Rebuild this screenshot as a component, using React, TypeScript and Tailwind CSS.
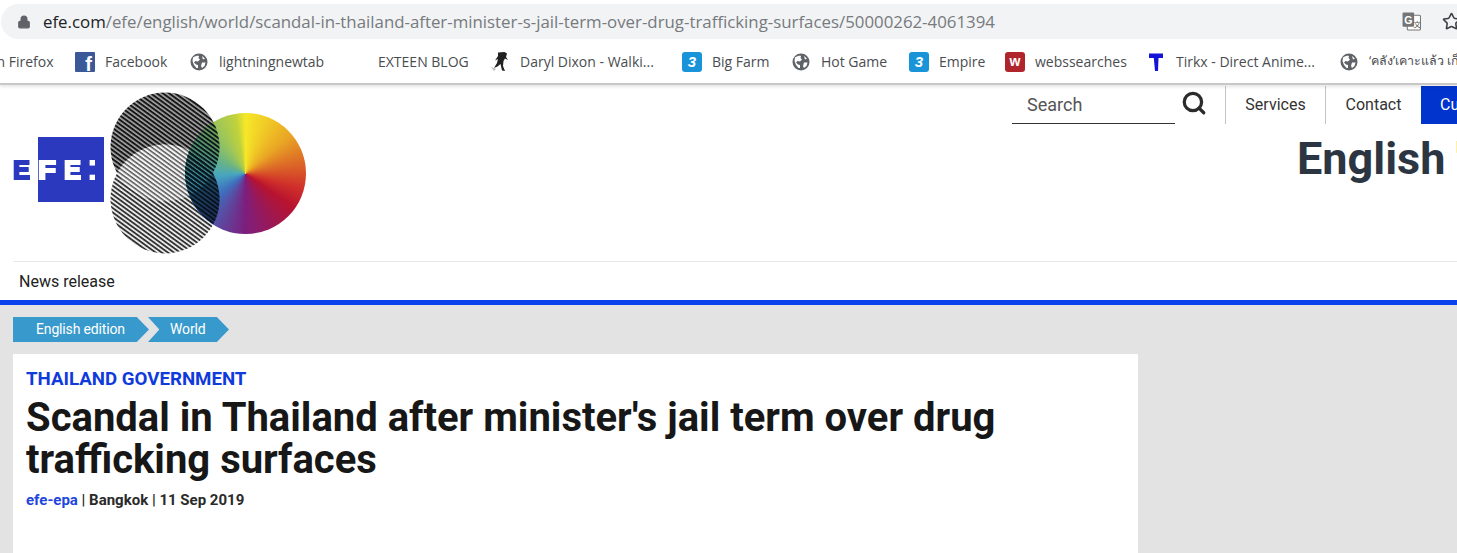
import React from 'react';
import { Lock, Search, Star } from 'lucide-react';

const Globe = () => (
  <svg viewBox="0 0 18 18" className="w-[18px] h-[18px] mr-px shrink-0">
    <circle cx="9" cy="9" r="8.5" fill="#5f6368" />
    <path d="M3 4.5 C5 3 8 2.5 9 3 L8.5 5 L10 6.5 L8 8.5 L5.5 8 L4 9.5 L6 11.5 L8 12 L8 15 L6.5 15 L4 12 L2.5 8 Z" fill="#fff" />
    <path d="M12 9.5 L15.5 9.5 L14.5 13 L12 15 L11 13 Z" fill="#fff" />
    <path d="M12 3 L15 5.5 L13 6.5 Z" fill="#fff" />
  </svg>
);

const Cube = () => (
  <span className="w-5 h-5 rounded-[3px] bg-[#1a94d9] text-white text-[15px] leading-5 font-bold italic text-center shrink-0 font-['Liberation_Sans',sans-serif]">3</span>
);

const bookmarkClass = "flex items-center gap-[10px] shrink-0 text-[14px] text-[#4a4d50] font-['Open_Sans','Noto_Sans',sans-serif]";
const logoFont = 'Liberation Sans, sans-serif';
const topCircle = 'M110.5 62 a54.5 54.5 0 1 0 109 0 a54.5 54.5 0 1 0 -109 0 Z';

const Logo = () => (
  <svg viewBox="0 0 320 175" className="w-[320px] h-[175px] shrink-0 blur-[0.5px]">
    <defs>
      <pattern id="dark" width="3.6" height="3.6" patternUnits="userSpaceOnUse" patternTransform="rotate(36)">
        <rect width="3.6" height="3.6" fill="#a8a8a8" />
        <rect width="3.6" height="2" fill="#161616" />
      </pattern>
      <pattern id="mid" width="3.6" height="3.6" patternUnits="userSpaceOnUse" patternTransform="rotate(36)">
        <rect width="3.6" height="3.6" fill="#e8e8e8" />
        <rect width="3.6" height="1.7" fill="#2a2a2a" />
      </pattern>
      <pattern id="light" width="3.6" height="3.6" patternUnits="userSpaceOnUse" patternTransform="rotate(36)">
        <rect width="3.6" height="3.6" fill="#f4f4f4" />
        <rect width="3.6" height="1.5" fill="#555" />
      </pattern>
      <pattern id="over" width="3.6" height="3.6" patternUnits="userSpaceOnUse" patternTransform="rotate(36)">
        <rect width="3.6" height="2" fill="#08161c" />
      </pattern>
      <clipPath id="wheel"><circle cx="245.5" cy="88" r="60.5" /></clipPath>
      <clipPath id="top"><circle cx="165" cy="62" r="54.5" /></clipPath>
      <clipPath id="bottom"><circle cx="165" cy="114" r="54.5" /></clipPath>
    </defs>
    <rect x="38" y="52" width="66" height="65" fill="#2a39bd" />
    <text x="13" y="94" fontSize="26" fontWeight="900" fontFamily={logoFont} fill="#2a39bd" stroke="#2a39bd" strokeWidth="2" textLength="17" lengthAdjust="spacingAndGlyphs">E</text>
    <text x="38" y="94" fontSize="26" fontWeight="900" fontFamily={logoFont} fill="#fff" stroke="#fff" strokeWidth="2" textLength="18" lengthAdjust="spacingAndGlyphs">F</text>
    <text x="64" y="94" fontSize="26" fontWeight="900" fontFamily={logoFont} fill="#fff" stroke="#fff" strokeWidth="2" textLength="17" lengthAdjust="spacingAndGlyphs">E</text>
    <text x="86" y="95" fontSize="38" fontWeight="900" fontFamily={logoFont} fill="#fff">:</text>
    <circle cx="165" cy="62" r="54.5" fill="url(#dark)" />
    <circle cx="165" cy="114" r="54.5" fill="url(#mid)" />
    <g clipPath="url(#top)"><circle cx="165" cy="114" r="54.5" fill="url(#light)" /></g>
    <foreignObject x="185" y="27.5" width="121" height="121">
      <div className="w-[121px] h-[121px] rounded-full bg-[conic-gradient(#f6e828_0deg,#e9a524_50deg,#d0302a_105deg,#b8132f_125deg,#7d1e7d_180deg,#3f6ebd_230deg,#46a5c0_265deg,#6cb482_300deg,#c0d23c_350deg,#f6e828_360deg)]" />
    </foreignObject>
    <g clipPath="url(#wheel)">
      <circle cx="165" cy="62" r="54.5" fill="#0a3030" opacity="0.18" />
      <circle cx="165" cy="62" r="54.5" fill="url(#over)" />
      <circle cx="165" cy="114" r="54.5" fill="url(#over)" />
      <g clipPath="url(#bottom)">
        <path d={`M170 0 H320 V175 H170 Z ${topCircle}`} fillRule="evenodd" fill="#04101c" opacity="0.55" />
      </g>
    </g>
  </svg>
);

export default function App() {
  return (
    <div className="w-[1457px] h-[553px] overflow-hidden bg-[#e3e3e3] flex flex-col">
      {/* browser chrome */}
      <div className="bg-white h-[40px] pt-1 pl-px shrink-0">
        <div className="h-[35px] w-[1500px] rounded-l-full bg-[#f1f3f4] flex items-center">
          <Lock className="w-[14px] h-[14px] ml-[16px] text-[#5f6368]" fill="#5f6368" />
          <span className="ml-[12px] text-[16.83px] text-[#777a7e] whitespace-nowrap font-['Open_Sans',sans-serif]"><span className="text-[#202124]">efe.com</span>/efe/english/world/scandal-in-thailand-after-minister-s-jail-term-over-drug-trafficking-surfaces/50000262-4061394</span>
          <svg viewBox="0 0 18 18" className="ml-[407px] w-[19px] h-[19px] shrink-0">
            <rect x="5" y="3" width="12.5" height="14" rx="1" fill="#fff" stroke="#777" strokeWidth="1" />
            <rect x="0.5" y="0.5" width="11" height="13.5" rx="1" fill="#757575" />
            <text x="2.2" y="11" fontSize="10" fontWeight="700" fontFamily={logoFont} fill="#fff">G</text>
            <text x="11" y="14.5" fontSize="7" fontFamily="Noto Sans CJK SC, sans-serif" fill="#555">文</text>
          </svg>
          <Star className="ml-[21px] w-[19px] h-[19px] text-[#3c4043] shrink-0" strokeWidth={2} />
        </div>
      </div>
      <div className="relative z-10 bg-white h-[45px] shrink-0 border-b-2 border-[#c8c8c8] shadow-[0_2px_3px_rgba(0,0,0,0.1)] flex items-center overflow-hidden whitespace-nowrap">
        <div className={`${bookmarkClass} ml-[-7px] w-[82px]`}>in Firefox</div>
        <div className={`${bookmarkClass} w-[115px]`}>
          <span className="w-5 h-5 rounded-[1px] bg-[#3b5998] text-white font-bold text-[20px] leading-[25px] text-right pr-[3px] overflow-hidden font-['Liberation_Sans',sans-serif]">f</span>
          Facebook
        </div>
        <div className={`${bookmarkClass} w-[188px]`}><Globe />lightningnewtab</div>
        <div className={`${bookmarkClass} w-[113px]`}>EXTEEN BLOG</div>
        <div className={`${bookmarkClass} w-[191px]`}>
          <svg viewBox="0 0 20 20" className="w-5 h-5 shrink-0 -ml-px">
            <path d="M8 0.5 L14.5 0 L17 1.5 L16 5 L18 8 L15 6.5 L13.5 9 L13 14 L15 19 L12 18.5 L10.5 12 L7.5 14.5 L4 16 L7 11 L8 7 L5 8.5 L8 4 Z" fill="#222" />
            <path d="M1 15 L6 17 L4 19 Z" fill="#bbb" />
          </svg>
          Daryl Dixon - Walki...
        </div>
        <div className={`${bookmarkClass} w-[110px]`}><Cube />Big Farm</div>
        <div className={`${bookmarkClass} w-[117px]`}><Globe />Hot Game</div>
        <div className={`${bookmarkClass} w-[96px]`}><Cube />Empire</div>
        <div className={`${bookmarkClass} w-[141px]`}>
          <span className="w-5 h-5 rounded-[3px] bg-[#b0252b] text-white font-bold text-[14px] leading-[18px] text-center font-['Liberation_Sans',sans-serif]">w</span>
          webssearches
        </div>
        <div className={`${bookmarkClass} w-[194px]`}>
          <svg viewBox="0 0 20 20" className="w-5 h-5 shrink-0"><path d="M3 1.5 H17 V6 H12.5 L12 19 L9 19 L7.8 6 H3 Z" fill="#1414d8" /></svg>
          Tirkx - Direct Anime...
        </div>
        <div className={bookmarkClass}><Globe /><span className="text-[12.5px]">‘คลัง’เคาะแล้ว เก็บ</span></div>
      </div>

      {/* site header */}
      <header className="bg-white h-[215px] shrink-0 pl-[13px] flex flex-col">
        <div className="flex h-[176px] overflow-hidden">
          <div className="w-0"><div className="-ml-[13px]"><Logo /></div></div>
          <div className="flex-1 flex flex-col items-end font-['Roboto',sans-serif]">
            <div className="w-full pl-[999px] flex h-[38px] mt-px">
              <div className="w-[163px] shrink-0 border-b border-[#333] text-[18px] text-[#555] pl-[15px] leading-[38px]">Search</div>
              <Search className="w-[26px] h-[26px] ml-[6px] mt-[4px] text-[#2b2b2b] shrink-0" strokeWidth={3} />
              <div className="ml-[18px] w-[100px] shrink-0 border-l border-[#c4c4c4] text-[16px] text-[#333] text-center leading-[37px]">Services</div>
              <div className="w-[96px] shrink-0 border-l border-[#c4c4c4] text-[16px] text-[#333] text-center leading-[37px]">Contact</div>
              <div className="w-[60px] shrink-0 bg-[#0034cc] text-[16px] text-white pl-[19px] leading-[37px] overflow-hidden">Customer</div>
            </div>
            <div className="w-full pl-[1284px] mt-[10px] whitespace-nowrap text-[45px] font-bold leading-[50px] text-[#2c3643]">English <span className="-ml-px text-[#e8b93a]">'</span></div>
          </div>
        </div>
        <div className="border-t border-[#e8e8e8] h-[39px] text-[16px] text-[#222] pl-[6px] leading-[39px] font-['Roboto',sans-serif]">News release</div>
      </header>
      <div className="h-[5px] bg-[#0a42ec] shrink-0" />

      {/* page */}
      <main className="pl-[13px] pt-[12px] font-['Roboto',sans-serif]">
        <div className="flex h-[25px] text-[14px] tracking-[-0.15px] text-white leading-[25px]">
          <div className="w-[136px] pl-[23px] bg-[#3799cc] [clip-path:polygon(0_0,91%_0,100%_50%,91%_100%,0_100%)]">English edition</div>
          <div className="-ml-px w-[81px] pl-[22px] bg-[#3799cc] [clip-path:polygon(0_0,85%_0,100%_50%,85%_100%,0_100%,14%_50%)]">World</div>
        </div>
        <article className="mt-[12px] w-[1125px] h-[300px] bg-white pl-[13px] pt-[13px]">
          <div className="text-[18.7px] font-bold leading-[24px] text-[#0f3bdc]">THAILAND GOVERNMENT</div>
          <h1 className="mt-[6px] w-[1050px] text-[40px] font-bold leading-[42px] text-[#171717]">Scandal in Thailand after minister's jail term over drug trafficking surfaces</h1>
          <div className="mt-[8px] text-[15px] font-bold text-[#2a2a2a]"><span className="text-[#1e45dd]">efe-epa</span> | Bangkok | 11 Sep 2019</div>
        </article>
      </main>
    </div>
  );
}
